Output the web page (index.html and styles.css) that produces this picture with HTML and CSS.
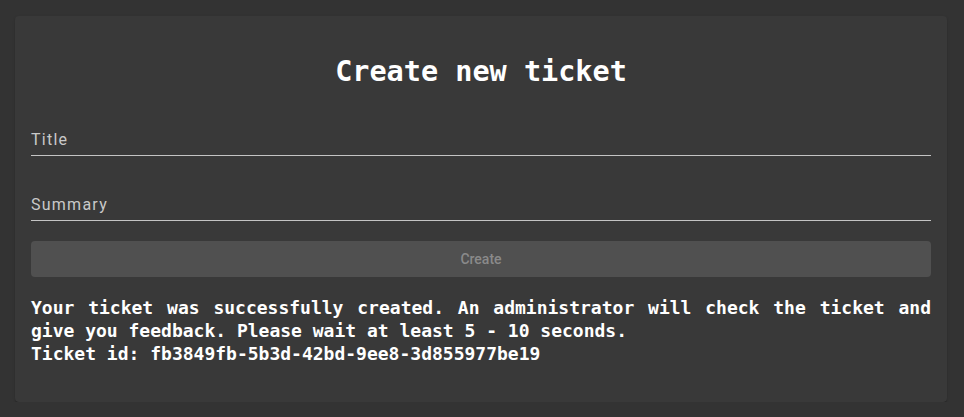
FILE: index.html
```html
<!DOCTYPE html>
<html lang="en">
<head>
<meta charset="utf-8">
<title>Create new ticket</title>
<link rel="stylesheet" href="styles.css">
</head>
<body>
<main class="card">
  <h1 class="heading">Create new ticket</h1>
  <form class="form">
    <label class="field">
      <span class="field-label">Title</span>
    </label>
    <label class="field">
      <span class="field-label">Summary</span>
    </label>
    <button type="button" class="btn" disabled>Create</button>
  </form>
  <p class="message">Your ticket was successfully created. An administrator will check the ticket and give you feedback. Please wait at least 5 - 10 seconds.<br>Ticket id: fb3849fb-5b3d-42bd-9ee8-3d855977be19</p>
</main>
</body>
</html>
```
FILE: styles.css
```css
html, body {
  margin: 0;
  padding: 0;
  background: #333333;
}
body {
  padding: 16px 17px 0 15px;
  font-family: Roboto, "Liberation Sans", sans-serif;
}
.card {
  background: #393939;
  border-radius: 4px;
  box-shadow: 0 2px 1px -1px rgba(0,0,0,0.2), 0 1px 1px 0 rgba(0,0,0,0.14), 0 1px 3px 0 rgba(0,0,0,0.12);
  padding: 16px 16px 36px;
  height: 386px;
  box-sizing: border-box;
}
.heading {
  margin: 20px 0 0;
  height: 40px;
  line-height: 40px;
  text-align: center;
  font-family: "DejaVu Sans Mono", "Liberation Mono", monospace;
  font-weight: bold;
  font-size: 28.5px;
  color: #ffffff;
}
.form {
  display: flex;
  flex-direction: column;
}
.field {
  display: block;
  padding-top: 38px;
  padding-bottom: 5px;
  border-bottom: 1px solid #c4c4c4;
}
.field + .field {
  padding-top: 39px;
}
.field-label {
  display: block;
  line-height: 20px;
  font-size: 16px;
  letter-spacing: 1.25px;
  color: #c9c9c9;
}
.btn {
  margin-top: 20px;
  height: 36px;
  padding: 0 0 1px;
  border: 0;
  border-radius: 4px;
  background: #505050;
  color: #8a8a8a;
  font-family: Roboto, "Liberation Sans", sans-serif;
  font-size: 14px;
  font-weight: 500;
}
.message {
  margin: 19px 0 0;
  font-family: "DejaVu Sans Mono", "Liberation Mono", monospace;
  font-weight: bold;
  font-size: 18px;
  line-height: 23px;
  color: #ffffff;
  text-align: justify;
}
```
